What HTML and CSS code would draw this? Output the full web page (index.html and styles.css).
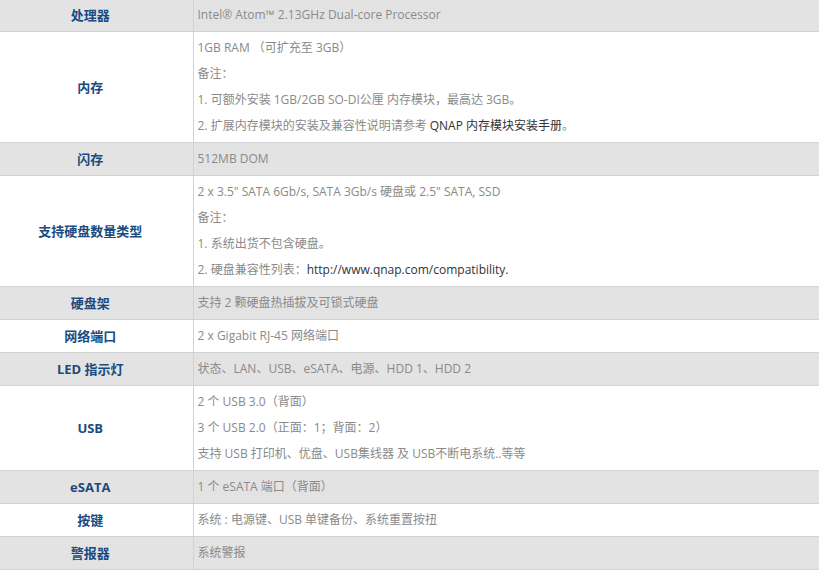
FILE: index.html
```html
<!DOCTYPE html>
<html lang="zh-CN">
<head>
<meta charset="utf-8">
<title>规格</title>
<link rel="stylesheet" href="styles.css">
</head>
<body>
<table class="spec">
  <colgroup><col class="col-label"><col class="col-value"></colgroup>
  <tbody>
    <tr class="alt"><th>处理器</th><td>Intel® Atom™ 2.13GHz Dual-core Processor</td></tr>
    <tr><th>内存</th><td>1GB RAM （可扩充至 3GB）<br>备注：<br>1. 可额外安装 1GB/2GB SO-DI公厘 内存模块，最高达 3GB。<br>2. 扩展内存模块的安装及兼容性说明请参考 <span class="dark">QNAP 内存模块安装手册</span>。</td></tr>
    <tr class="alt"><th>闪存</th><td>512MB DOM</td></tr>
    <tr><th>支持硬盘数量类型</th><td>2 x 3.5" SATA 6Gb/s, SATA 3Gb/s 硬盘或 2.5" SATA, SSD<br>备注：<br>1. 系统出货不包含硬盘。<br>2. 硬盘兼容性列表：<span class="dark">http://www.qnap.com/compatibility.</span></td></tr>
    <tr class="alt"><th>硬盘架</th><td>支持 2 颗硬盘热插拔及可锁式硬盘</td></tr>
    <tr><th>网络端口</th><td>2 x Gigabit RJ-45 网络端口</td></tr>
    <tr class="alt"><th>LED 指示灯</th><td>状态、LAN、USB、eSATA、电源、HDD 1、HDD 2</td></tr>
    <tr><th>USB</th><td>2 个 USB 3.0（背面）<br>3 个 USB 2.0（正面：1；背面：2）<br>支持 USB 打印机、优盘、USB集线器 及 USB不断电系统..等等</td></tr>
    <tr class="alt"><th>eSATA</th><td>1 个 eSATA 端口（背面）</td></tr>
    <tr><th>按键</th><td>系统 : 电源键、USB 单键备份、系统重置按扭</td></tr>
    <tr class="alt"><th>警报器</th><td>系统警报</td></tr>
  </tbody>
</table>
</body>
</html>
```
FILE: styles.css
```css
html, body {
  margin: 0;
  padding: 0;
  background: #ffffff;
}
.spec {
  width: 100%;
  margin-top: -2px;
  border-collapse: collapse;
  table-layout: fixed;
  font-family: "Open Sans", "Noto Sans CJK SC", sans-serif;
  font-size: 12px;
  line-height: 26px;
}
.col-label { width: 193px; }
.spec th, .spec td {
  border: 1px solid #d2d2d2;
  padding: 3px 4px;
  vertical-align: middle;
}
.spec th {
  border-left: none;
  padding-left: 0;
  padding-right: 12px;
}
.spec td { border-right: none; }
.spec th {
  text-align: center;
  font-weight: bold;
  font-size: 13px;
  color: #1a4a80;
}
.spec td {
  text-align: left;
  color: #8a8a8a;
}
.spec .alt th, .spec .alt td { background: #e3e3e3; }
.dark { color: #333333; }
```
